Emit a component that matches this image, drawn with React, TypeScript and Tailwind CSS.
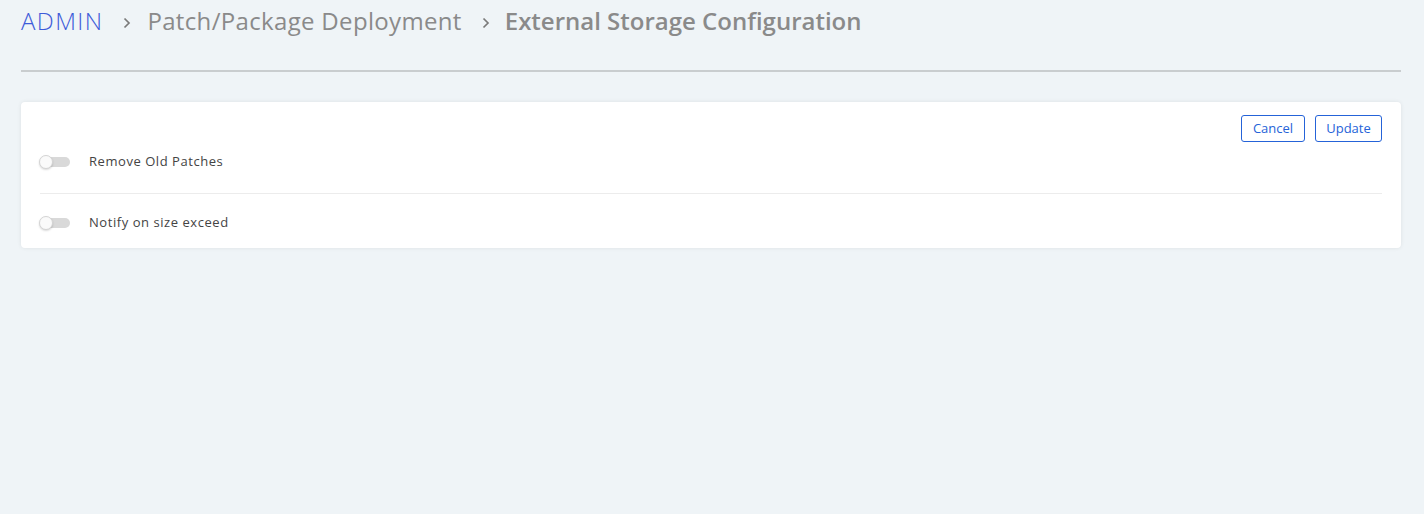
import React from "react";

function Chevron({ cls }: { cls: string }) {
  return (
    <svg width="10" height="12" viewBox="0 0 10 12" className={cls}>
      <path d="M2.5 1.5 L7 6 L2.5 10.5" fill="none" stroke="#7a7a7a" strokeWidth="1.7" />
    </svg>
  );
}

function Toggle() {
  return (
    <div className="relative w-[31px] h-[14px] shrink-0 -ml-[1px]">
      <div className="absolute left-[2px] top-[2px] w-[29px] h-[10px] rounded-full bg-[#d9d9d9]" />
      <div className="absolute left-0 top-0 w-[14px] h-[14px] rounded-full bg-[#fafafa] border border-[#d4d4d4] shadow-[0_1px_2px_rgba(0,0,0,0.15)]" />
    </div>
  );
}

export default function App() {
  return (
    <div className="w-[1424px] h-[514px] bg-[#eff4f7] font-['Open_Sans',sans-serif] pl-[21px] pr-[23px] overflow-hidden">
      <div className="flex items-center h-[42px]">
        <span className="text-[24px] text-[#3d5bd9] font-light tracking-[1.4px]">ADMIN</span>
        <Chevron cls="ml-[19px] mr-[15px] mt-[3px]" />
        <span className="text-[24px] text-[#8a8a8a] tracking-[0.33px]">Patch/Package Deployment</span>
        <Chevron cls="ml-[19px] mr-[14px] mt-[3px]" />
        <span className="text-[24px] text-[#8a8a8a] font-semibold">External Storage Configuration</span>
      </div>
      <div className="mt-[28px] h-[2px] bg-[#c9cdcf]" />
      <div className="mt-[30px] bg-white rounded-[4px] shadow-[0_0_4px_rgba(0,0,0,0.08)] px-[19px] pt-[13px] pb-[12px]">
        <div className="flex justify-end gap-[10px]">
          <button className="h-[27px] w-[64px] border border-[#2563d8] rounded-[3px] text-[13px] text-[#2563d8] bg-white">Cancel</button>
          <button className="h-[27px] w-[67px] border border-[#2563d8] rounded-[3px] text-[13px] text-[#2563d8] bg-white">Update</button>
        </div>
        <div className="flex items-center h-[26px] mt-[7px]">
          <Toggle />
          <span className="ml-[19px] text-[13px] tracking-[0.55px] text-[#444]">Remove Old Patches</span>
        </div>
        <div className="mt-[18px] h-px bg-[#ececec]" />
        <div className="flex items-center h-[26px] mt-[16px]">
          <Toggle />
          <span className="ml-[19px] text-[13px] tracking-[0.55px] text-[#444]">Notify on size exceed</span>
        </div>
      </div>
    </div>
  );
}
